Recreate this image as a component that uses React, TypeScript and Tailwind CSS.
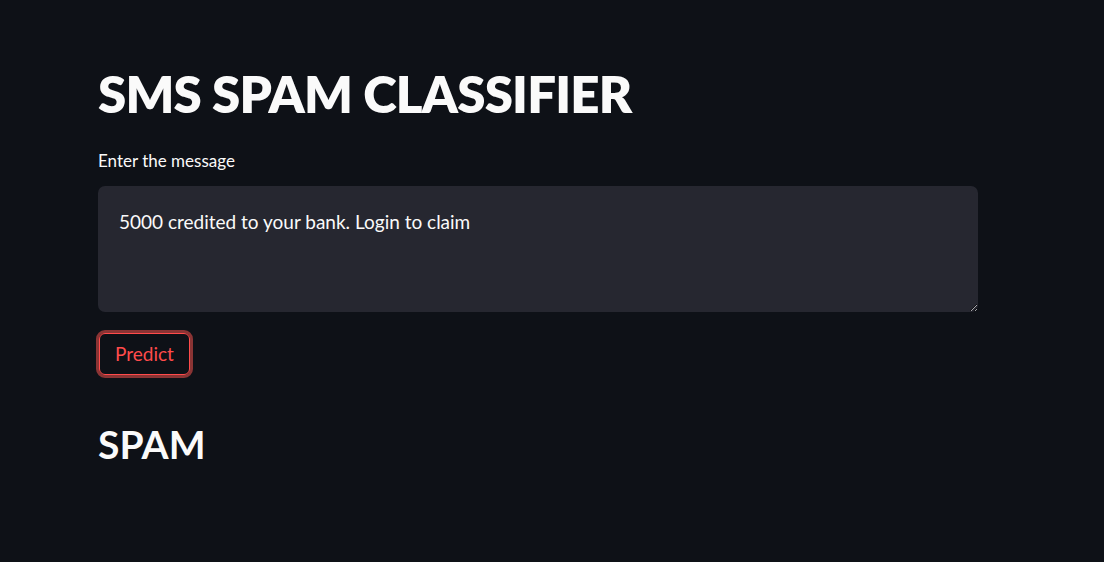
import React from 'react';

const App = () => {
  return (
    <div className="min-h-screen w-full bg-[#0e1117] text-[#fafafa]" style={{ fontFamily: 'Lato, "Open Sans", sans-serif' }}>
      <div className="w-[880px] ml-[98px] pt-[62px]">
        {/* Title */}
        <h1 className="text-[51px] leading-[64px] font-extrabold tracking-[-0.8px]">SMS SPAM CLASSIFIER</h1>

        {/* Text area */}
        <label className="block mt-[23px] text-[17px] leading-[24px]">Enter the message</label>
        <div className="relative mt-[13px]">
          <textarea
            className="block w-[880px] h-[126px] rounded-[7px] bg-[#262730] px-[21px] pt-[22px] pb-[20px] text-[19px] leading-[28px] text-[#fafafa] resize-y outline-none"
            style={{ fontFamily: 'inherit' }}
            defaultValue="5000 credited to your bank. Login to claim"
          />
        </div>

        {/* Predict button */}
        <button className="mt-[18px] ml-[-2px] rounded-[9px] border-[3px] border-[#8a3434] p-0">
          <span className="block rounded-[6px] border border-[#ff4b4b] bg-[#0e1117] px-[15px] h-[42px] leading-[40px] text-[19px] text-[#ff4b4b]">
            Predict
          </span>
        </button>

        {/* Result */}
        <h2 className="mt-[40px] text-[39px] leading-[52px] font-bold">SPAM</h2>
      </div>
    </div>
  );
};

export default App;
